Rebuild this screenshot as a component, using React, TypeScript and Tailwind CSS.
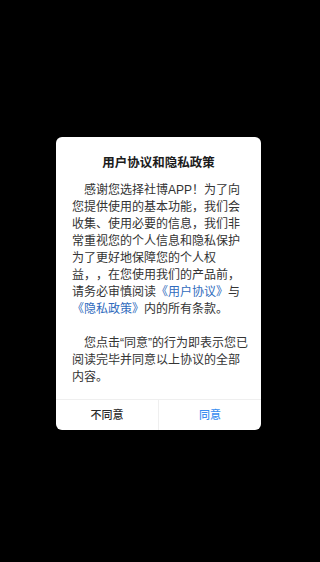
import React from "react";

export default function App() {
  const font = { fontFamily: '"Liberation Sans", "Noto Sans CJK SC", sans-serif' };
  return (
    <div className="w-[320px] h-[562px] bg-black flex flex-col items-start pt-[137px] pl-[56px]" style={font}>
      <div className="w-[205px] bg-white rounded-[6px] overflow-hidden flex flex-col">
        <div className="pt-[18px] text-center text-[12.5px] leading-[16px] font-bold text-[#1c1c1c]">
          用户协议和隐私政策
        </div>
        <div className="mt-[11px] pl-4 pr-[11px] pb-[13px] text-[12px] leading-[17px] text-[#333333] [text-spacing-trim:space-all]">
          <p className="indent-[12px]">
            感谢您选择社博APP！为了向您提供使用的基本功能，我们会收集、使用必要的信息，我们非常重视您的个人信息和隐私保护为了更好地保障您的个人权益，，在您使用我们的产品前，请务必审慎阅读
            <span className="text-[#2f6bbd]">《用户协议》</span>与
            <span className="text-[#2f6bbd]">《隐私政策》</span>内的所有条款。
          </p>
          <p className="indent-[12px] mt-[17px]">
            您点击“同意”的行为即表示您已阅读完毕并同意以上协议的全部内容。
          </p>
        </div>
        <div className="flex border-t border-[#efefef] h-[31px]">
          <div className="flex-1 flex items-center justify-center text-[11px] font-medium text-[#2a2a2a] border-r border-[#efefef]">
            不同意
          </div>
          <div className="flex-1 flex items-center justify-center text-[11px] font-medium text-[#3b8ef0]">
            同意
          </div>
        </div>
      </div>
    </div>
  );
}
